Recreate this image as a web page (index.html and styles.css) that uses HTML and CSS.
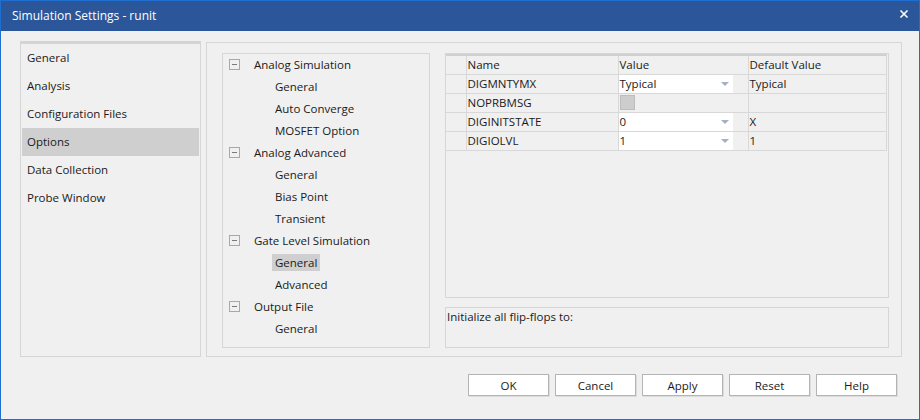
FILE: index.html
```html
<!DOCTYPE html>
<html lang="en">
<head>
    <meta charset="UTF-8">
    <title>Simulation Settings - runit</title>
    <link rel="stylesheet" href="styles.css">
</head>
<body>
    <div class="window">
        <div class="titlebar">
            <span class="title">Simulation Settings - runit</span>
            <svg class="close" width="10" height="10" viewBox="0 0 10 10">
                <path d="M1.5 1.5 L8.5 8.5 M8.5 1.5 L1.5 8.5" stroke="#ffffff" stroke-width="1.6" fill="none"/>
            </svg>
        </div>

        <div class="content">
            <ul class="categories">
                <li>General</li>
                <li>Analysis</li>
                <li>Configuration Files</li>
                <li class="selected">Options</li>
                <li>Data Collection</li>
                <li>Probe Window</li>
            </ul>

            <div class="page">
                <ul class="tree">
                    <li class="group"><span class="expander"></span>Analog Simulation</li>
                    <li class="leaf"><span>General</span></li>
                    <li class="leaf"><span>Auto Converge</span></li>
                    <li class="leaf"><span>MOSFET Option</span></li>
                    <li class="group"><span class="expander"></span>Analog Advanced</li>
                    <li class="leaf"><span>General</span></li>
                    <li class="leaf"><span>Bias Point</span></li>
                    <li class="leaf"><span>Transient</span></li>
                    <li class="group"><span class="expander"></span>Gate Level Simulation</li>
                    <li class="leaf"><span class="current">General</span></li>
                    <li class="leaf"><span>Advanced</span></li>
                    <li class="group"><span class="expander"></span>Output File</li>
                    <li class="leaf"><span>General</span></li>
                </ul>

                <div class="right">
                    <div class="grid-box">
                        <table class="props">
                            <tr class="head">
                                <td class="rowhead"></td>
                                <td class="name">Name</td>
                                <td class="value">Value</td>
                                <td class="default">Default Value</td>
                            </tr>
                            <tr>
                                <td class="rowhead"></td>
                                <td class="name">DIGMNTYMX</td>
                                <td class="value"><div class="combo">Typical<span class="arrow"></span></div></td>
                                <td class="default">Typical</td>
                            </tr>
                            <tr>
                                <td class="rowhead"></td>
                                <td class="name">NOPRBMSG</td>
                                <td class="value"><span class="check"></span></td>
                                <td class="default"></td>
                            </tr>
                            <tr>
                                <td class="rowhead"></td>
                                <td class="name">DIGINITSTATE</td>
                                <td class="value"><div class="combo">0<span class="arrow"></span></div></td>
                                <td class="default">X</td>
                            </tr>
                            <tr>
                                <td class="rowhead"></td>
                                <td class="name">DIGIOLVL</td>
                                <td class="value"><div class="combo">1<span class="arrow"></span></div></td>
                                <td class="default">1</td>
                            </tr>
                        </table>
                    </div>
                    <div class="description">Initialize all flip-flops to:</div>
                </div>
            </div>
        </div>

        <div class="buttons">
            <button>OK</button>
            <button>Cancel</button>
            <button>Apply</button>
            <button>Reset</button>
            <button>Help</button>
        </div>
    </div>
</body>
</html>
```

FILE: styles.css
```css
* {
    margin: 0;
    padding: 0;
    box-sizing: border-box;
}

body {
    font-family: 'Open Sans', 'Noto Sans', sans-serif;
    font-size: 11.5px;
    color: #1a1a1a;
    background: #f0f0f0;
}

.window {
    width: 920px;
    height: 420px;
    border: 1px solid #1e6fd0;
    background: #f0f0f0;
    display: flex;
    flex-direction: column;
}

.titlebar {
    height: 30px;
    background: #2b579a;
    color: white;
    display: flex;
    align-items: center;
    justify-content: space-between;
    padding: 0 12px 2px 11px;
}

.title {
    font-size: 12px;
}

.close {
    margin-top: -3px;
    margin-right: -2px;
}

.content {
    display: flex;
    gap: 5px;
    padding: 10px 17px 0 19px;
    height: 326px;
}

.categories {
    list-style: none;
    width: 182px;
    border: 1px solid #d6d6d6;
    border-top: 3px solid #d4d4d4;
    padding: 0 1px;
}

.categories li {
    height: 28px;
    line-height: 28px;
    padding-left: 5px;
}

.categories li.selected {
    background: #cfcfcf;
}

.page {
    flex: 1;
    margin-top: 1px;
    border: 1px solid #d6d6d6;
    display: flex;
    gap: 15px;
    padding: 10px 12px 8px 15px;
}

.tree {
    list-style: none;
    width: 208px;
    border: 1px solid #d6d6d6;
    padding-top: 0;
    margin-top: 0;
}

.tree li {
    height: 22px;
    display: flex;
    align-items: center;
}

.tree li:first-child {
    margin-top: -1px;
}

.tree li.group {
    padding-left: 6px;
}

.expander {
    width: 11px;
    height: 11px;
    border: 1px solid #a8a8a8;
    margin-right: 14px;
    position: relative;
}

.expander::after {
    content: '';
    position: absolute;
    left: 2px;
    top: 4px;
    width: 5px;
    height: 1px;
    background: #7a7a7a;
}

.tree li.leaf {
    padding-left: 49px;
}

.tree li.leaf span {
    padding: 1px 3px;
}

.tree li.leaf span.current {
    background: #cfcfcf;
}

.right {
    flex: 1;
    display: flex;
    flex-direction: column;
    gap: 9px;
}

.grid-box {
    height: 246px;
    border: 1px solid #d6d6d6;
    padding: 0 1px 0 0;
}

.props {
    width: 441px;
    border-collapse: collapse;
    border-top: 2px solid #d0d0d0;
}

.props td {
    height: 19px;
    border: 1px solid #d8d8d8;
    padding: 0 0 0 1px;
    white-space: nowrap;
}

.props tr td:first-child {
    border-left: none;
}

.props .rowhead {
    width: 20px;
}

.props .name {
    width: 152px;
}

.props .value {
    width: 130px;
    padding: 0;
}

.props .head .value {
    padding-left: 1px;
}

.combo {
    width: 114px;
    height: 18px;
    background: white;
    display: flex;
    align-items: center;
    justify-content: space-between;
    padding: 0 4px 0 1px;
}

.arrow {
    width: 0;
    height: 0;
    border-left: 4px solid transparent;
    border-right: 4px solid transparent;
    border-top: 4px solid #a3b0c4;
}

.check {
    display: block;
    width: 15px;
    height: 15px;
    margin-left: 1px;
    background: #cdcdcd;
    border: 1px solid #bdbdbd;
}

.description {
    height: 41px;
    border: 1px solid #d6d6d6;
    padding: 1px 0 0 1px;
}

.buttons {
    display: flex;
    justify-content: flex-end;
    gap: 6px;
    padding: 17px 22px 0 0;
}

.buttons button {
    width: 81px;
    height: 22px;
    background: white;
    border: 1px solid #b4b4b4;
    box-shadow: 1px 1px 0 #dcdcdc;
    font-family: inherit;
    font-size: 11.5px;
    color: #1a1a1a;
}
```
